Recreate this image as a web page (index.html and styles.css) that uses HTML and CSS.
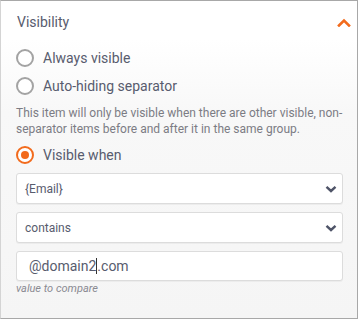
FILE: index.html
```html
<!DOCTYPE html>
<html lang="en">

<head>
    <meta charset="UTF-8">
    <meta name="viewport" content="width=device-width, initial-scale=1.0">
    <title>Visibility</title>
    <link rel="stylesheet" href="styles.css">
</head>

<body>
    <div class="panel">
        <div class="panel-header">
            <span class="panel-title">Visibility</span>
            <svg class="collapse-icon" width="14" height="9" viewBox="0 0 14 9">
                <path d="M2 7.5 L7 2.5 L12 7.5" fill="none" stroke="#f26b1d" stroke-width="2.6" stroke-linecap="square" />
            </svg>
        </div>

        <div class="panel-body">
            <label class="radio-row">
                <span class="radio"></span>
                <span class="radio-label">Always visible</span>
            </label>
            <label class="radio-row">
                <span class="radio"></span>
                <span class="radio-label">Auto-hiding separator</span>
            </label>

            <p class="hint">This item will only be visible when there are other visible, non-separator items before and after it in the same group.</p>

            <label class="radio-row">
                <span class="radio checked"></span>
                <span class="radio-label">Visible when</span>
            </label>

            <div class="field select">
                <span>{Email}</span>
                <svg width="12" height="8" viewBox="0 0 12 8">
                    <path d="M1.5 1.8 L6 6 L10.5 1.8" fill="none" stroke="#4f5468" stroke-width="2.4" />
                </svg>
            </div>
            <div class="field select">
                <span>contains</span>
                <svg width="12" height="8" viewBox="0 0 12 8">
                    <path d="M1.5 1.8 L6 6 L10.5 1.8" fill="none" stroke="#4f5468" stroke-width="2.4" />
                </svg>
            </div>
            <div class="field text-input">
                <span class="caret">@domain2</span><span>.com</span>
            </div>
            <div class="field-help">value to compare</div>
        </div>
    </div>
</body>

</html>
```

FILE: styles.css
```css
body {
    margin: 0;
    font-family: Roboto, "Noto Sans", Arial, sans-serif;
    color: #585c6e;
    background: #ffffff;
}

.panel {
    width: 358px;
    height: 319px;
    box-sizing: border-box;
    border: 1px solid #a8a8a8;
    border-left-color: #d4d4d4;
    background: linear-gradient(180deg, #ffffff 0%, #ffffff 12%, #f8f8f8 35%, #f5f5f5 100%);
}

.panel-header {
    height: 43px;
    box-sizing: border-box;
    padding: 11px 6px 0 16px;
    display: flex;
    justify-content: space-between;
    align-items: flex-start;
}

.panel-title {
    font-size: 14px;
    line-height: 20px;
}

.collapse-icon {
    margin-top: 6px;
}

.panel-body {
    padding: 0 14px 0 15px;
    display: flex;
    flex-direction: column;
}

.radio-row {
    height: 28px;
    display: flex;
    align-items: center;
    gap: 9px;
    font-size: 14px;
}

.radio {
    width: 18px;
    height: 18px;
    box-sizing: border-box;
    border: 2px solid #a3a3a3;
    border-radius: 50%;
    background: #ffffff;
    display: flex;
    align-items: center;
    justify-content: center;
}

.radio.checked {
    border-color: #f26b1d;
}

.radio.checked::after {
    content: "";
    width: 8px;
    height: 8px;
    border-radius: 50%;
    background: #f26b1d;
}

.hint {
    margin: 5px 0 4px 0;
    font-size: 12px;
    line-height: 16px;
    color: #7c7c84;
}

.field {
    height: 31px;
    box-sizing: border-box;
    border: 1px solid #dcdcdc;
    border-radius: 3px;
    background: #ffffff;
    box-shadow: 0 1px 0 #ececec;
    display: flex;
    align-items: center;
}

.select {
    justify-content: space-between;
    padding: 0 5px 0 8px;
    font-size: 12px;
    margin-top: 4px;
    margin-bottom: 4px;
}

.select + .select {
    margin-top: 4px;
}

.text-input {
    margin-top: 4px;
    padding-left: 12px;
    font-size: 14px;
    height: 30px;
}

.caret {
    border-right: 1px solid #333333;
}

.field-help {
    margin-top: 1px;
    font-size: 11px;
    line-height: 14px;
    font-style: italic;
    color: #8a8a92;
}
```
